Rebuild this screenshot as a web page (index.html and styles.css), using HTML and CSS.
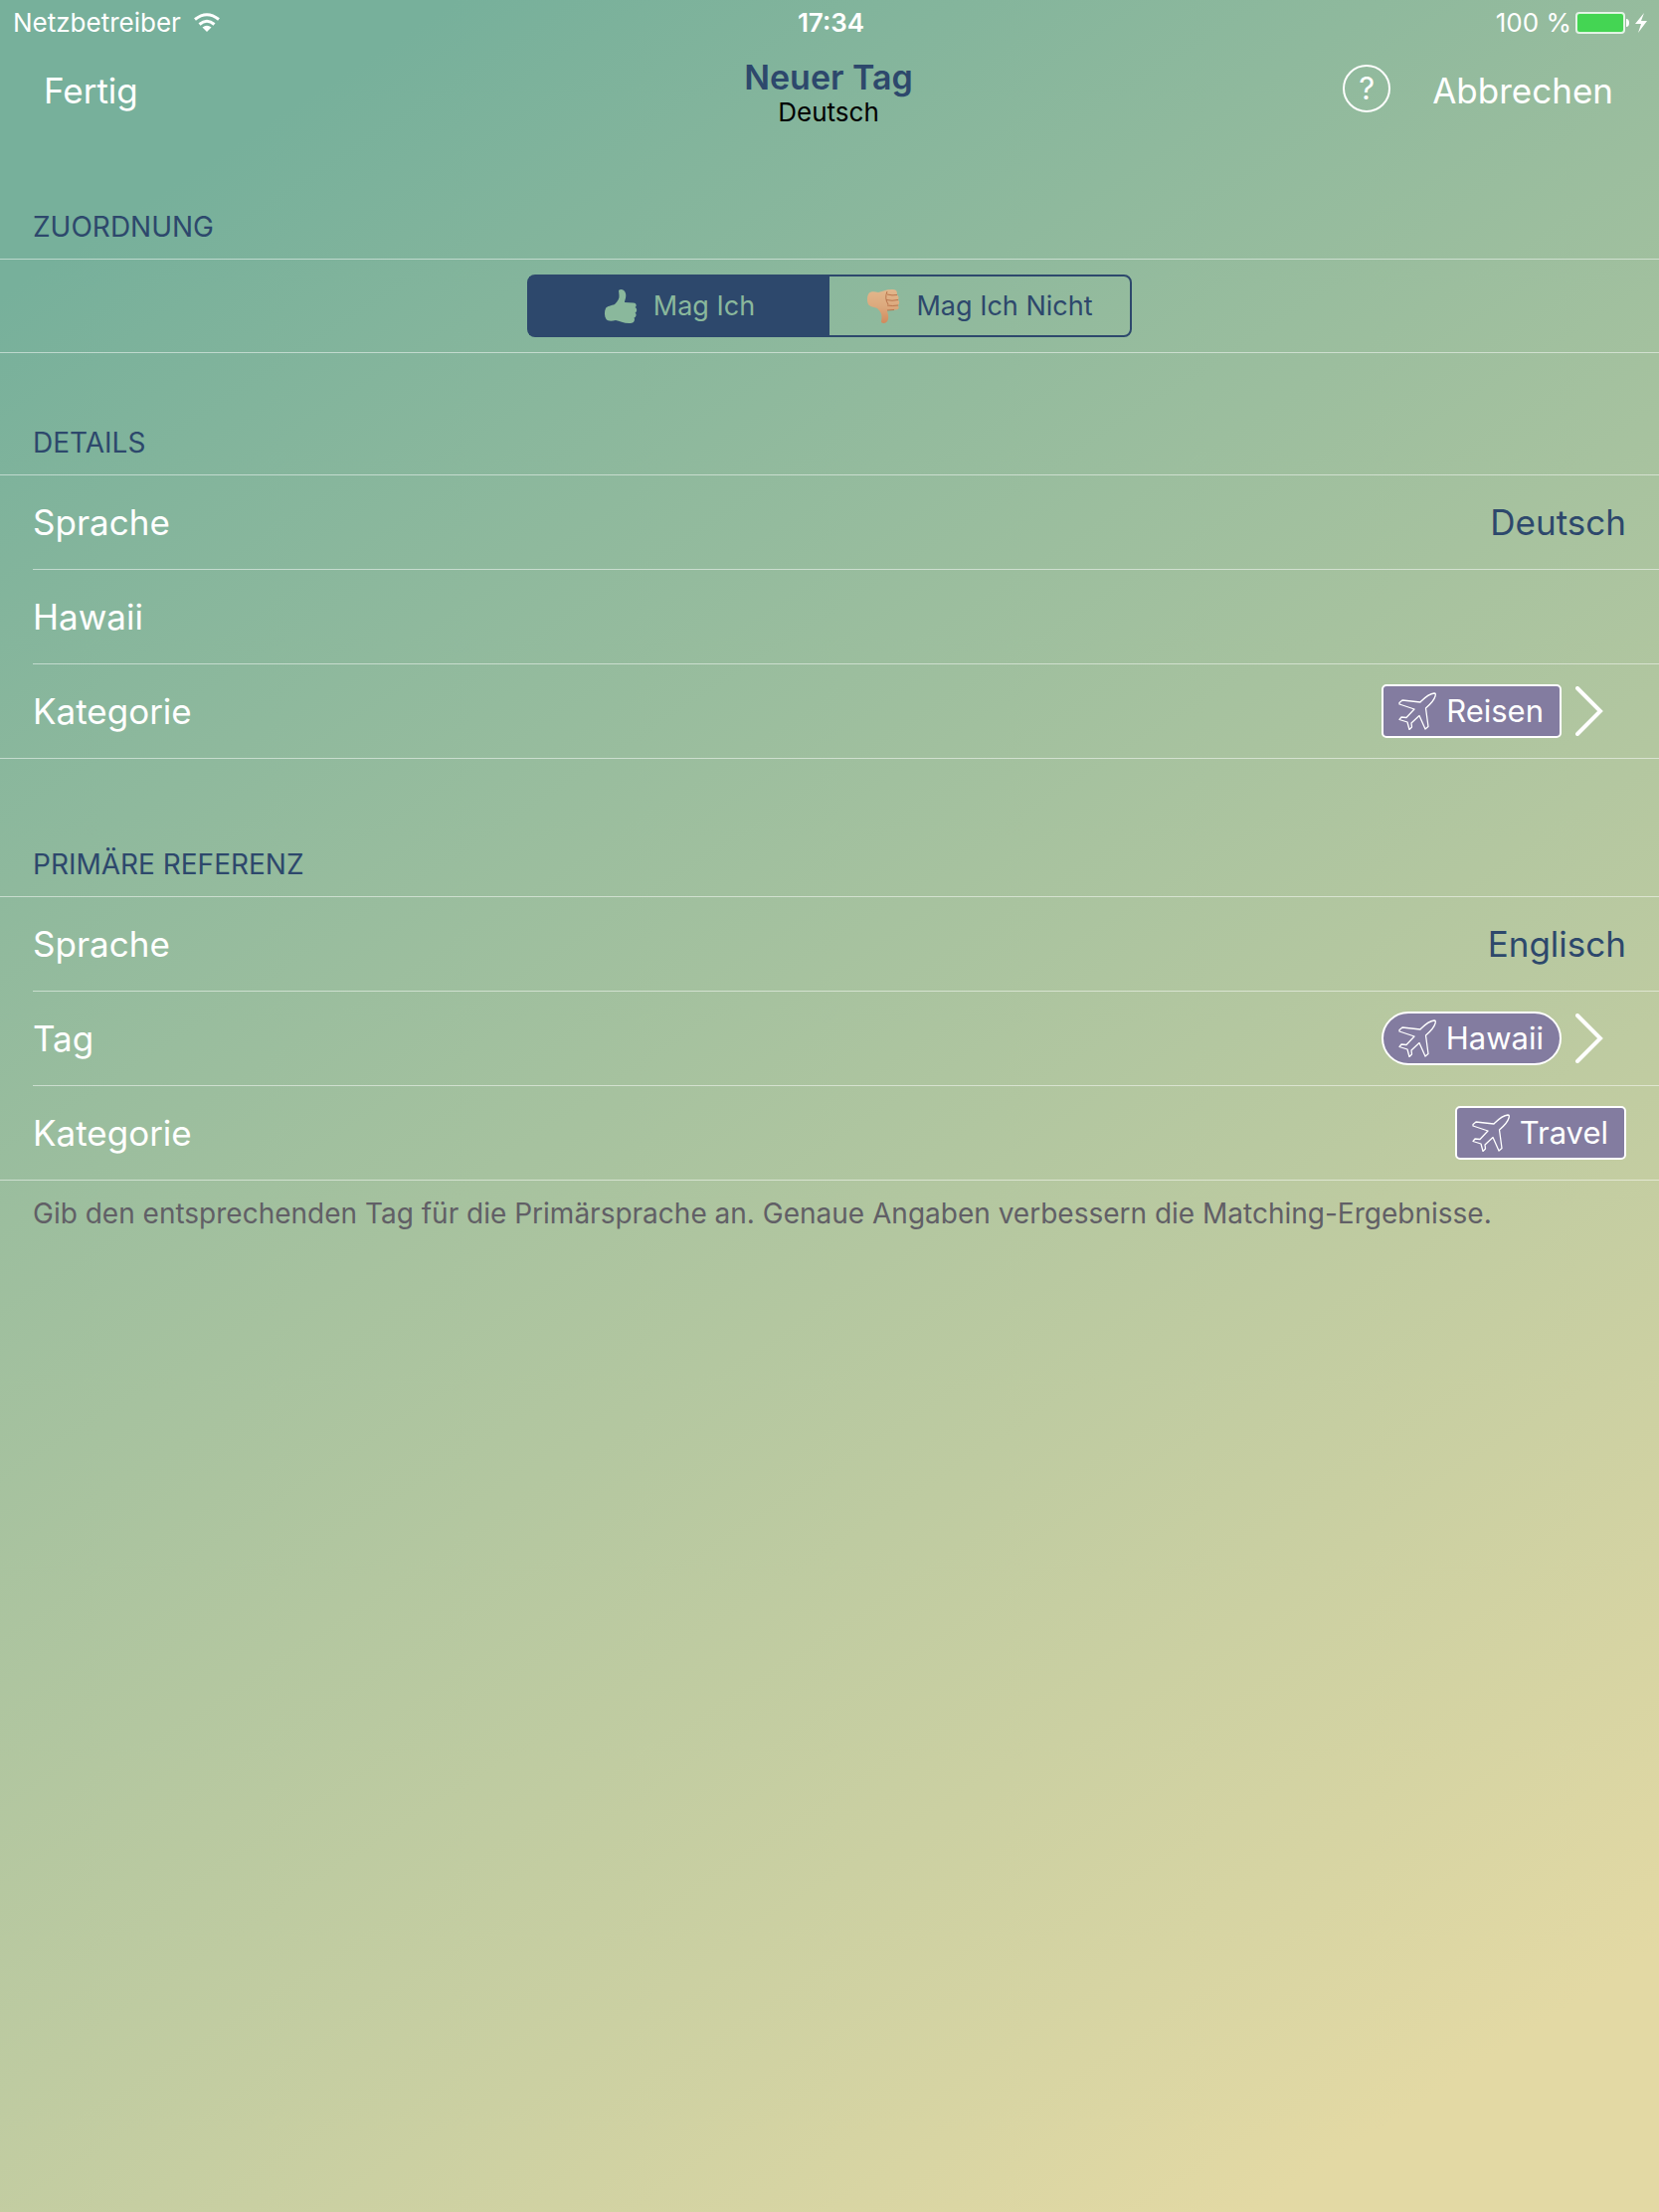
FILE: index.html
```html
<!DOCTYPE html>
<html lang="de">
<head>
<meta charset="utf-8">
<meta name="viewport" content="width=device-width, initial-scale=1">
<title>Neuer Tag</title>
<link rel="stylesheet" href="styles.css">
</head>
<body>
<svg class="sprite" aria-hidden="true">
  <symbol id="plane" viewBox="0 0 38 38">
    <path d="M1 10.500 L4 8 L22 10 C26 6 30 1.500 36 1 C37.500 1 37.500 2 37 4 C36 8 31 13 27.500 16 L30 34.500 L27 37 L21 23.500 L13 31 L13.500 35 L11 37.500 L9 30 L1 27.500 L3 25 L8 25.500 L16 17 L1 12 Z" fill="none" stroke="currentColor" stroke-width="1.300" stroke-linejoin="round"/>
  </symbol>
  <symbol id="thumb" viewBox="0 0 34 36">
    <path d="M15 2 C17 0 21 1 22 5 C23 9 21 12 21 14 L30 14.500 C33 14.500 33.500 18 31.500 19 C34 20 33.500 24 31.500 24.500 C33.500 26 32.500 29 30.500 29.500 C32 32 30 35 27 35 C21 35.500 16 33 12 32 C8 33 4 33 2.500 31 C.500 28 .500 23 2 20 C3 18 8 17 11 16 C14 13 16 10 15.500 7 Z"/>
  </symbol>
</svg>
<header>
  <div class="status">
    <div class="carrier">Netzbetreiber
      <svg width="28" height="20" viewBox="0 0 28 20" fill="none" stroke="currentColor" stroke-width="3"><path d="M2 6.500 Q14 -3 26 6.500M6.500 11.500 Q14 5 21.500 11.500"/><path d="M9.500 14.500 Q14 11 18.500 14.500 L14 19Z" fill="currentColor" stroke="none"/></svg>
    </div>
    <time class="clock">17:34</time>
    <div class="power">100&nbsp;%
      <svg width="74" height="22" viewBox="0 0 74 22"><rect x="1" y="1" width="48" height="20" rx="3" fill="#44d553" stroke="#fff" stroke-opacity=".8" stroke-width="2"/><path d="M51 7 Q54 7 54 11 T51 15Z" fill="#fff"/><path d="M69 1 L60 12 H66 L63 21 L72 9 H66Z" fill="#fff"/></svg>
    </div>
  </div>
  <nav class="navbar">
    <button class="nav-button" type="button">Fertig</button>
    <div class="heading"><h1>Neuer Tag</h1><p>Deutsch</p></div>
    <div class="nav-actions">
      <button class="help" type="button" aria-label="Hilfe">?</button>
      <button class="nav-button" type="button">Abbrechen</button>
    </div>
  </nav>
</header>
<main>
  <section>
    <h2>Zuordnung</h2>
    <div class="group">
      <div class="row row-center">
        <div class="segmented" role="group" aria-label="Zuordnung">
          <button class="segment selected" type="button" aria-pressed="true"><svg class="thumb" width="34" height="36" fill="currentColor"><use href="#thumb"/></svg>Mag Ich</button>
          <button class="segment" type="button" aria-pressed="false"><svg class="thumb" width="34" height="36" viewBox="0 0 34 36">
            <defs><linearGradient id="skin" x2="0" y2="1"><stop stop-color="#d08a5c"/><stop offset=".5" stop-color="#dca97d"/><stop offset="1" stop-color="#e2b78c"/></linearGradient></defs>
            <g transform="matrix(1 0 0 -1 0 36)"><use href="#thumb" fill="url(#skin)"/></g>
            <path d="M21 6Q26 7.500 31 6.500M20 11.500Q26 13 32 11.500M21 17Q26 18 32 17M21 22L28 21.500M21 3Q18 10 22 16" fill="none" stroke="#b9744c" stroke-width="1"/></svg>Mag Ich Nicht</button>
        </div>
      </div>
    </div>
  </section>
  <section>
    <h2>Details</h2>
    <div class="group">
      <div class="row"><span>Sprache</span><span class="value">Deutsch</span></div>
      <div class="row"><input class="field" type="text" value="Hawaii" aria-label="Tag"></div>
      <div class="row"><span>Kategorie</span>
        <button class="link" type="button"><span class="tag"><svg width="38" height="38"><use href="#plane"/></svg>Reisen</span><svg class="chevron" width="28" height="50" viewBox="0 0 28 50"><path d="M2 2L25 25L2 48"/></svg></button>
      </div>
    </div>
  </section>
  <section>
    <h2>Primäre Referenz</h2>
    <div class="group">
      <div class="row"><span>Sprache</span><span class="value">Englisch</span></div>
      <div class="row"><span>Tag</span>
        <button class="link" type="button"><span class="tag pill"><svg width="38" height="38"><use href="#plane"/></svg>Hawaii</span><svg class="chevron" width="28" height="50" viewBox="0 0 28 50"><path d="M2 2L25 25L2 48"/></svg></button>
      </div>
      <div class="row"><span>Kategorie</span><span class="tag"><svg width="38" height="38"><use href="#plane"/></svg>Travel</span></div>
    </div>
    <p class="note">Gib den entsprechenden Tag für die Primärsprache an. Genaue Angaben verbessern die Matching-Ergebnisse.</p>
  </section>
</main>
</body>
</html>
```
FILE: styles.css
```css
* { box-sizing: border-box; }
html { min-height: 100%; }
body {
  margin: 0;
  min-height: 100vh;
  background: linear-gradient(147deg, #77b09b 9%, #e3d9a4 92%);
  color: #fff;
  font-family: Inter, "Liberation Sans", sans-serif;
  font-size: 35px;
  line-height: 44px;
}
button, input {
  margin: 0;
  padding: 0;
  border: 0;
  background: none;
  color: inherit;
  font: inherit;
}
h1, h2, p { margin: 0; }
.sprite { display: none; }
.status {
  display: grid;
  grid-template-columns: 1fr auto 1fr;
  align-items: center;
  height: 46px;
  padding: 0 10px 0 13px;
  font-size: 26px;
}
.carrier, .power { display: flex; align-items: center; gap: 12px; }
.power { justify-content: flex-end; gap: 4px; }
.clock { font-weight: 600; }
.navbar {
  display: grid;
  grid-template-columns: 1fr auto 1fr;
  align-items: center;
  height: 86px;
  padding: 0 46px 0 44px;
}
.nav-button { justify-self: start; padding-top: 4px; }
.heading { padding-top: 8px; text-align: center; }
h1 { font-size: 34px; font-weight: 600; line-height: 40px; color: #2d486c; }
.heading p { font-size: 26px; line-height: 30px; color: #000; }
.nav-actions { display: flex; align-items: center; justify-content: flex-end; gap: 42px; }
.help {
  width: 48px;
  height: 48px;
  border: 2px solid #fff;
  border-radius: 50%;
  font-size: 31px;
  line-height: 44px;
}
h2 {
  display: flex;
  align-items: flex-end;
  height: 128px;
  padding: 0 33px 14px;
  font-size: 28px;
  font-weight: 400;
  line-height: 36px;
  text-transform: uppercase;
  color: #2d486c;
}
section + section h2 { height: 122px; }
section + section + section h2 { height: 138px; }
.group { border: solid rgba(255, 255, 255, .5); border-width: 1px 0; }
.row {
  display: flex;
  align-items: center;
  justify-content: space-between;
  height: 94px;
  margin-left: 33px;
  padding-right: 33px;
}
.row + .row { height: 95px; border-top: 1px solid rgba(255, 255, 255, .5); }
.row-center { justify-content: center; height: 93px; margin: 0; padding: 0; }
.value { color: #2d486c; }
.field { width: 100%; height: 60px; outline: 0; }
.segmented {
  display: flex;
  width: 608px;
  height: 63px;
  border: 2px solid #2d486c;
  border-radius: 8px;
}
.segment {
  flex: 1;
  display: flex;
  align-items: center;
  justify-content: center;
  gap: 16px;
  font-size: 27px;
  color: #2d486c;
}
.selected { background: #2d486c; color: #8ab89c; }
.link { display: flex; align-items: center; gap: 14px; padding-right: 23px; }
.tag {
  display: flex;
  align-items: center;
  gap: 10px;
  height: 54px;
  padding: 0 16px 0 15px;
  border: 2px solid #fff;
  border-radius: 5px;
  background: #837ca0;
  font-size: 31px;
}
.pill { border-radius: 27px; }
.chevron { fill: none; stroke: #fff; stroke-width: 4; stroke-linecap: round; }
.note { padding: 15px 33px; font-size: 28px; line-height: 36px; color: #615f66; }
```
